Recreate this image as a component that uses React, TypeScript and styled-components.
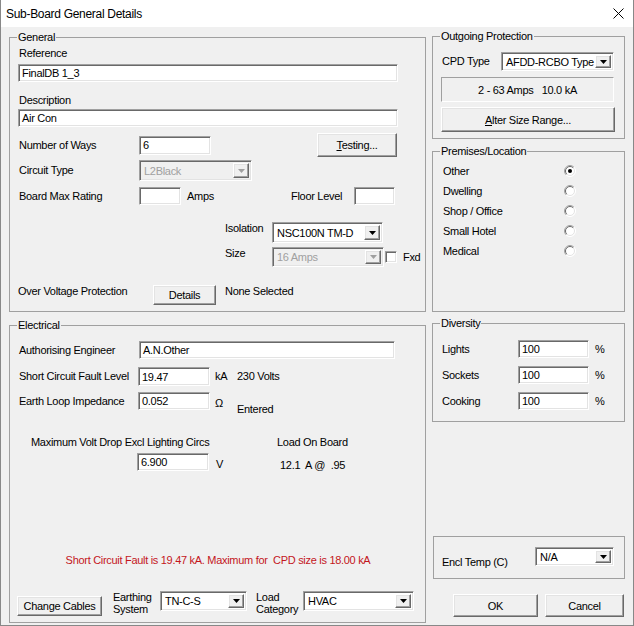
import React from 'react';
import styled, { createGlobalStyle, css } from 'styled-components';

const GlobalStyle = createGlobalStyle`
  *, *::before, *::after { box-sizing: border-box; }
  html, body { margin: 0; padding: 0; background: #f0f0f0; }
  body {
    font-family: "Liberation Sans", Arial, sans-serif;
    font-size: 11px;
    letter-spacing: -0.3px;
    color: #000;
  }
`;

const sunken = css`
  border: 1px solid;
  border-color: #a0a0a0 #fff #fff #a0a0a0;
  box-shadow: inset 1px 1px 0 #696969, inset -1px -1px 0 #e3e3e3;
`;

const raised = css`
  border: 1px solid;
  border-color: #fff #696969 #696969 #fff;
  box-shadow: inset -1px -1px 0 #a0a0a0, inset 1px 1px 0 #e3e3e3;
  background: #f0f0f0;
`;

const Window = styled.div`
  width: 634px;
  height: 626px;
  border: 1px solid #888;
  border-top: none;
  background: #f0f0f0;
  display: flex;
  flex-direction: column;
`;

const TitleBar = styled.div`
  height: 27px;
  flex-shrink: 0;
  background: #fff;
  display: flex;
  align-items: center;
  padding-left: 5px;
  font-size: 12px;
  letter-spacing: -0.3px;
`;

const CloseBox = styled.div`
  margin-left: auto;
  width: 30px;
  height: 27px;
  display: flex;
  align-items: center;
  justify-content: center;
`;

const Body = styled.div`
  flex: 1;
  display: grid;
  grid-template-columns: 417px 193px;
  column-gap: 6px;
  padding: 0 8px;
`;

const Column = styled.div<{ $pt: number }>`
  display: flex;
  flex-direction: column;
  padding-top: ${p => p.$pt}px;
`;

const Group = styled.fieldset<{ $pb: number; $mt?: number }>`
  margin: ${p => p.$mt ?? 0}px 0 0;
  padding: 0 8px ${p => p.$pb}px;
  border: 1px solid #a0a0a0;
  min-width: 0;
  display: flex;
  flex-direction: column;
`;

const Legend = styled.legend`
  padding: 0 1px;
  margin-left: -1px;
  line-height: 13px;
`;

const Row = styled.div<{ $h: number; $mt: number; $align?: string; $justify?: string }>`
  display: flex;
  flex-shrink: 0;
  align-items: ${p => p.$align ?? 'center'};
  justify-content: ${p => p.$justify ?? 'flex-start'};
  height: ${p => p.$h}px;
  margin-top: ${p => p.$mt}px;
`;

const Label = styled.span<{ $w?: number; $ml?: number; $mt?: number; $color?: string }>`
  flex-shrink: 0;
  line-height: 13px;
  white-space: pre;
  padding-left: 1px;
  color: ${p => p.$color ?? 'inherit'};
  ${p => p.$w !== undefined && `width: ${p.$w}px;`}
  ${p => p.$ml !== undefined && `margin-left: ${p.$ml}px;`}
  ${p => p.$mt !== undefined && `align-self: flex-start; margin-top: ${p.$mt}px;`}
`;

const TwoLine = styled(Label)`
  line-height: 12px;
  white-space: pre-line;
`;

const TextBox = styled.div<{ $w: number; $h?: number; $ml?: number }>`
  ${sunken};
  flex-shrink: 0;
  width: ${p => p.$w}px;
  height: ${p => p.$h ?? 18}px;
  margin-left: ${p => p.$ml ?? 0}px;
  background: #fff;
  padding: 0 3px;
  display: flex;
  align-items: center;
  white-space: nowrap;
  overflow: hidden;
`;

const ComboBox = styled.div<{ $w: number; $h?: number; $disabled?: boolean; $mt?: number }>`
  ${sunken};
  flex-shrink: 0;
  width: ${p => p.$w}px;
  height: ${p => p.$h ?? 20}px;
  padding: 2px;
  display: flex;
  background: ${p => (p.$disabled ? '#f0f0f0' : '#fff')};
  color: ${p => (p.$disabled ? '#a0a0a0' : '#000')};
  ${p => p.$mt !== undefined && `align-self: flex-start; margin-top: ${p.$mt}px;`}
`;

const ComboText = styled.span`
  flex: 1;
  display: flex;
  align-items: center;
  padding-left: 2px;
  white-space: nowrap;
  overflow: hidden;
`;

const ArrowButton = styled.span`
  ${raised};
  width: 16px;
  flex-shrink: 0;
  display: flex;
  align-items: center;
  justify-content: center;
`;

const Button = styled.button<{ $w: number; $h: number; $ml?: number; $mt?: number }>`
  ${raised};
  flex-shrink: 0;
  width: ${p => p.$w}px;
  height: ${p => p.$h}px;
  margin: ${p => p.$mt ?? 0}px 0 0 ${p => p.$ml ?? 0}px;
  padding: 0;
  font: inherit;
  letter-spacing: inherit;
  color: #000;
  ${p => p.$mt !== undefined && `align-self: flex-start;`}
`;

const InfoBox = styled.div`
  height: 25px;
  width: 173px;
  margin-top: 6px;
  border: 1px solid;
  border-color: #a0a0a0 #fff #fff #a0a0a0;
  display: flex;
  align-items: center;
  justify-content: center;
  white-space: pre;
`;

const CheckBox = styled.span`
  ${sunken};
  width: 12px;
  height: 12px;
  background: #fff;
  flex-shrink: 0;
  align-self: flex-start;
  margin-top: 4px;
  margin-left: 1px;
`;

const EnclBox = styled.div`
  margin: 114px 0 0 1px;
  width: 192px;
  height: 43px;
  border: 1px solid #a0a0a0;
  display: flex;
  align-items: flex-start;
  padding-left: 7px;
`;

const Warning = styled(Label)`
  color: #c4161c;
`;

const Arrow = ({ disabled }: { disabled?: boolean }) => (
  <svg width="7" height="4" viewBox="0 0 7 4">
    <path d="M0 0h7L3.5 4z" fill={disabled ? '#a0a0a0' : '#000'} />
  </svg>
);

const Combo = (props: { w: number; h?: number; value: string; disabled?: boolean; mt?: number }) => (
  <ComboBox $w={props.w} $h={props.h} $disabled={props.disabled} $mt={props.mt}>
    <ComboText>{props.value}</ComboText>
    <ArrowButton>
      <Arrow disabled={props.disabled} />
    </ArrowButton>
  </ComboBox>
);

const Radio = ({ checked }: { checked?: boolean }) => (
  <svg width="12" height="12" viewBox="0 0 12 12" style={{ flexShrink: 0 }}>
    <circle cx="6" cy="6" r="5.5" fill="#fff" stroke="#fff" />
    <path d="M2.1 9.9A5.5 5.5 0 0 1 9.9 2.1" fill="none" stroke="#a0a0a0" />
    <path d="M2.8 9.2A4.5 4.5 0 0 1 9.2 2.8" fill="none" stroke="#696969" />
    <path d="M9.2 2.8A4.5 4.5 0 0 1 2.8 9.2" fill="none" stroke="#e3e3e3" />
    {checked && <circle cx="6" cy="6" r="2" fill="#000" />}
  </svg>
);

const premises = ['Other', 'Dwelling', 'Shop / Office', 'Small Hotel', 'Medical'];
const diversity = ['Lights', 'Sockets', 'Cooking'];

const App = () => {
  return (
    <>
      <GlobalStyle />
      <Window>
        <TitleBar>
          Sub-Board General Details
          <CloseBox>
            <svg width="11" height="11" viewBox="0 0 11 11">
              <path d="M0.5 0.5l10 10M10.5 0.5l-10 10" stroke="#000" strokeWidth="1" />
            </svg>
          </CloseBox>
        </TitleBar>
        <Body>
          <Column $pt={4}>
            <Group $pb={6}>
              <Legend>General</Legend>
              <Row $h={14} $mt={2}>
                <Label>Reference</Label>
              </Row>
              <Row $h={18} $mt={4}>
                <TextBox $w={380}>FinalDB 1_3</TextBox>
              </Row>
              <Row $h={14} $mt={11}>
                <Label>Description</Label>
              </Row>
              <Row $h={18} $mt={2}>
                <TextBox $w={380}>Air Con</TextBox>
              </Row>
              <Row $h={24} $mt={6}>
                <Label $w={121}>Number of Ways</Label>
                <TextBox $w={72} $h={19}>6</TextBox>
                <Button $w={80} $h={24} $ml={106}>
                  <u>T</u>esting...
                </Button>
              </Row>
              <Row $h={21} $mt={3}>
                <Label $w={121}>Circuit Type</Label>
                <Combo w={113} h={21} value="L2Black" disabled />
              </Row>
              <Row $h={20} $mt={5}>
                <Label $w={121}>Board Max Rating</Label>
                <TextBox $w={42}></TextBox>
                <Label $w={104} $ml={5}>Amps</Label>
                <Label $w={64}>Floor Level</Label>
                <TextBox $w={41}></TextBox>
              </Row>
              <Row $h={21} $mt={16}>
                <Label $w={48} $ml={206} $mt={0}>Isolation</Label>
                <Combo w={111} h={21} value="NSC100N TM-D" />
              </Row>
              <Row $h={20} $mt={4}>
                <Label $w={48} $ml={206} $mt={0}>Size</Label>
                <Combo w={112} h={20} value="16 Amps" disabled />
                <CheckBox />
                <Label $ml={5}>Fxd</Label>
              </Row>
              <Row $h={20} $mt={18}>
                <Label $w={136} $ml={-1} $mt={0}>Over Voltage Protection</Label>
                <Button $w={63} $h={20}>Details</Button>
                <Label $ml={8} $mt={0}>None Selected</Label>
              </Row>
            </Group>

            <Group $pb={5} $mt={7}>
              <Legend>Electrical</Legend>
              <Row $h={18} $mt={9}>
                <Label $w={121}>Authorising Engineer</Label>
                <TextBox $w={256}>A.N.Other</TextBox>
              </Row>
              <Row $h={19} $mt={8}>
                <Label $w={120}>Short Circuit Fault Level</Label>
                <TextBox $w={72} $h={19}>19.47</TextBox>
                <Label $w={22} $ml={4}>kA</Label>
                <Label>230 Volts</Label>
              </Row>
              <Row $h={18} $mt={6}>
                <Label $w={120}>Earth Loop Impedance</Label>
                <TextBox $w={72}>0.052</TextBox>
                <Label $w={22} $ml={4} $mt={5}>Ω</Label>
                <Label $mt={11}>Entered</Label>
              </Row>
              <Row $h={14} $mt={25}>
                <Label $w={246} $ml={12}>Maximum Volt Drop Excl Lighting Circs</Label>
                <Label>Load On Board</Label>
              </Row>
              <Row $h={18} $mt={4}>
                <TextBox $w={72} $ml={119}>6.900</TextBox>
                <Label $w={64} $ml={6} $mt={5}>V</Label>
                <Label $mt={6}>{'12.1  A @  .95'}</Label>
              </Row>
              <Row $h={14} $mt={82} $justify="center">
                <Warning>Short Circuit Fault is 19.47 kA. Maximum for  CPD size is 18.00 kA</Warning>
              </Row>
              <Row $h={27} $mt={23} $align="flex-start">
                <Button $w={85} $h={20} $ml={-1} $mt={6}>Change Cables</Button>
                <TwoLine $w={48} $ml={10} $mt={1}>{'Earthing\nSystem'}</TwoLine>
                <Combo w={87} h={20} value="TN-C-S" mt={1} />
                <TwoLine $w={48} $ml={8} $mt={1}>{'Load\nCategory'}</TwoLine>
                <Combo w={111} h={20} value="HVAC" mt={1} />
              </Row>
            </Group>
          </Column>

          <Column $pt={3}>
            <Group $pb={6}>
              <Legend>Outgoing Protection</Legend>
              <Row $h={19} $mt={9}>
                <Label $w={60}>CPD Type</Label>
                <Combo w={113} h={19} value="AFDD-RCBO Type" />
              </Row>
              <InfoBox>{'2 - 63 Amps   10.0 kA'}</InfoBox>
              <Row $h={25} $mt={5}>
                <Button $w={174} $h={25}>
                  <u>A</u>lter Size Range...
                </Button>
              </Row>
            </Group>

            <Group $pb={50} $mt={6}>
              <Legend>Premises/Location</Legend>
              {premises.map((p, i) => (
                <Row key={p} $h={20} $mt={i === 0 ? 3 : 0}>
                  <Label $w={122} $ml={1}>{p}</Label>
                  <Radio checked={i === 0} />
                </Row>
              ))}
            </Group>

            <Group $pb={11} $mt={5}>
              <Legend>Diversity</Legend>
              {diversity.map((d, i) => (
                <Row key={d} $h={18} $mt={i === 0 ? 10 : 8}>
                  <Label $w={77}>{d}</Label>
                  <TextBox $w={71}>100</TextBox>
                  <Label $ml={5}>%</Label>
                </Row>
              ))}
            </Group>

            <EnclBox>
              <Label $w={94} $mt={19}>Encl Temp (C)</Label>
              <Combo w={79} h={19} value="N/A" mt={10} />
            </EnclBox>

            <Row $h={23} $mt={15}>
              <Button $w={85} $h={23} $ml={21}>OK</Button>
              <Button $w={79} $h={23} $ml={7}>Cancel</Button>
            </Row>
          </Column>
        </Body>
      </Window>
    </>
  );
};

export default App;
